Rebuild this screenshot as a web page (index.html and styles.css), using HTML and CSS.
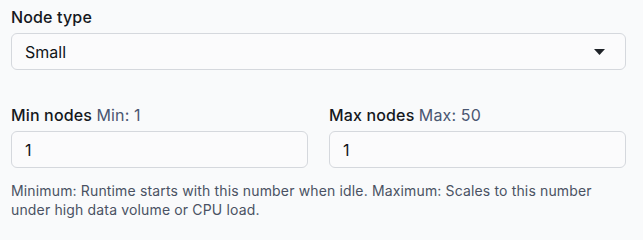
FILE: index.html
```html
<!DOCTYPE html>
<html lang="en">
<head>
<meta charset="utf-8">
<title>Node settings</title>
<link rel="stylesheet" href="styles.css">
</head>
<body>
<div class="form">
  <div class="field">
    <label class="label" for="node-type">Node type</label>
    <div class="select">
      <span class="select-value" id="node-type">Small</span>
      <svg class="caret" width="11" height="6" viewBox="0 0 11 6" aria-hidden="true"><path d="M0 0H11L5.5 6Z" fill="#1f2328"/></svg>
    </div>
  </div>
  <div class="row">
    <div class="field">
      <label class="label" for="min-nodes">Min nodes <span class="hint">Min: 1</span></label>
      <div class="input" id="min-nodes">1</div>
    </div>
    <div class="field">
      <label class="label" for="max-nodes">Max nodes <span class="hint">Max: 50</span></label>
      <div class="input" id="max-nodes">1</div>
    </div>
  </div>
  <p class="help">Minimum: Runtime starts with this number when idle. Maximum: Scales to this number under high data volume or CPU load.</p>
</div>
</body>
</html>
```

FILE: styles.css
```css
html, body {
  margin: 0;
  padding: 0;
  background: #f9fafb;
}
body {
  font-family: Inter, "Noto Sans", sans-serif;
  color: #111418;
}
.form {
  width: 615px;
  padding: 7px 0 0 11px;
  display: flex;
  flex-direction: column;
}
.field {
  display: flex;
  flex-direction: column;
  gap: 6px;
  min-width: 0;
}
.label {
  font-size: 16px;
  line-height: 20px;
  font-weight: 500;
  letter-spacing: 0.15px;
  color: #15181d;
}
.hint {
  font-weight: 400;
  color: #4a5671;
}
.select, .input {
  box-sizing: border-box;
  height: 37px;
  border: 1px solid #d5d8dd;
  border-radius: 6px;
  background: #fbfbfc;
  display: flex;
  align-items: center;
  padding: 0 20px 0 13px;
  font-size: 16px;
  color: #111418;
}
.select {
  justify-content: space-between;
}
.caret {
  display: block;
}
.row {
  margin-top: 35px;
  display: grid;
  grid-template-columns: 1fr 1fr;
  gap: 21px;
}
.help {
  margin: 13px 0 0;
  font-size: 14px;
  line-height: 19px;
  letter-spacing: 0.15px;
  color: #4a5263;
  padding-right: 30px;
}
```
